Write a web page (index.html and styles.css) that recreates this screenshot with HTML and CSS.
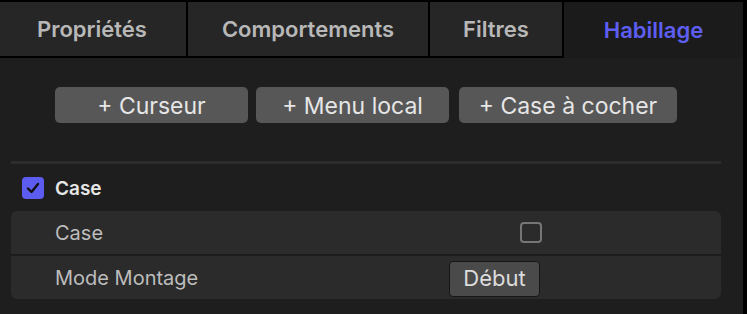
FILE: index.html
```html
<!DOCTYPE html>
<html lang="fr">
<head>
  <meta charset="UTF-8">
  <title>Habillage</title>
  <link rel="stylesheet" href="styles.css">
</head>
<body>

<div class="inspector">
  <div class="tabs">
    <div class="tab t1">Propriétés</div>
    <div class="tab t2">Comportements</div>
    <div class="tab t3">Filtres</div>
    <div class="tab active">Habillage</div>
  </div>

  <div class="content">
    <div class="add-row">
      <button class="add b1">+ Curseur</button>
      <button class="add b2">+ Menu local</button>
      <button class="add b3">+ Case à cocher</button>
    </div>

    <div class="sep"></div>

    <div class="group-head">
      <span class="check on">
        <svg width="14" height="12" viewBox="0 0 14 12"><path d="M2 6.5 L5.5 10 L12 2" fill="none" stroke="#111" stroke-width="2.4" stroke-linecap="round" stroke-linejoin="round"/></svg>
      </span>
      <span class="group-title">Case</span>
    </div>

    <div class="group">
      <div class="row">
        <span class="row-label">Case</span>
        <span class="row-ctrl"><span class="check off box"></span></span>
      </div>
      <div class="row">
        <span class="row-label">Mode Montage</span>
        <span class="row-ctrl"><button class="pop">Début</button></span>
      </div>
    </div>
  </div>
</div>

</body>
</html>
```

FILE: styles.css
```css
body { margin: 0; background: #000; font-family: Inter, "Liberation Sans", sans-serif; }
.inspector { width: 743px; height: 314px; border-top: 2px solid #000; border-right: 4px solid #000; background: #1e1e1e; overflow: hidden; }

.tabs { display: flex; height: 56px; }
.tab { height: 54px; display: flex; align-items: center; justify-content: center; background: #262626; color: #b8b8b8; font-weight: 600; font-size: 22px; border-bottom: 2px solid #000; border-right: 2px solid #000; }
.t1 { width: 184px; padding-right: 2px; }
.t2 { width: 240px; }
.t3 { width: 132px; }
.tab.active { flex: 1; border: none; height: 56px; background: #1b1b1b; color: #5e5ef2; }

.add-row { display: flex; gap: 8px; padding: 29px 0 0 55px; }
.add { height: 36px; border: none; border-radius: 5px; background: #575757; color: #e6e6e6; font-family: inherit; font-size: 23px; padding: 2px 0 0; }
.b1 { width: 193px; }
.b2 { width: 193px; }
.b3 { width: 218px; margin-left: 2px; }

.sep { height: 3px; background: #2c2c2c; margin: 38px 22px 0 11px; }

.group-head { display: flex; align-items: center; gap: 11px; padding: 13px 0 0 22px; height: 22px; }
.check { width: 22px; height: 22px; border-radius: 4px; box-sizing: border-box; display: flex; align-items: center; justify-content: center; }
.check.on { background: #5c5cf0; }
.check.off { border: 2px solid #767676; height: 21px; }
.group-title { color: #e6e6e6; font-weight: 600; font-size: 19px; }

.group { margin: 12px 22px 0 11px; background: #2b2b2b; border-radius: 6px; }
.row { display: flex; align-items: center; height: 43px; }
.row + .row { border-top: 2px solid #1c1c1c; }
.row-label { width: 394px; padding-left: 44px; color: #bdbdbd; font-size: 20px; }
.row-ctrl { display: flex; align-items: center; }
.box { margin-left: 71px; }
.pop { width: 91px; height: 36px; margin-top: 2px; background: #4a4a4a; border: 1px solid #161616; border-radius: 4px; color: #dcdcdc; font-family: inherit; font-size: 22px; padding: 0 0 1px; }
```
